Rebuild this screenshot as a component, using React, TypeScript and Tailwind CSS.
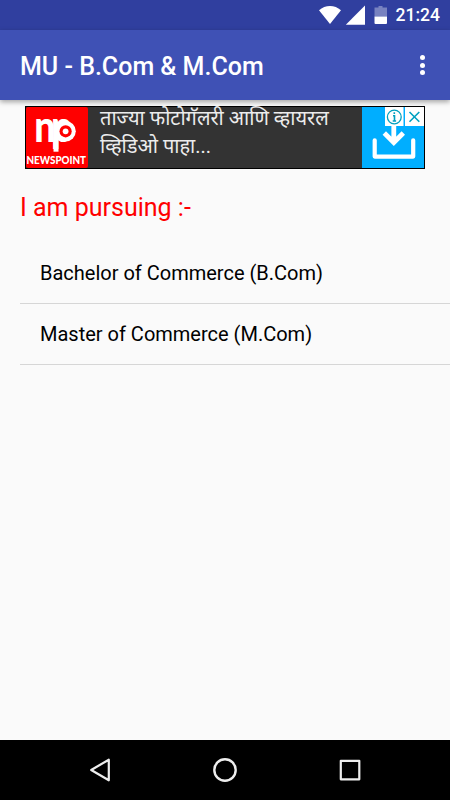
const courses = ["Bachelor of Commerce (B.Com)", "Master of Commerce (M.Com)"];

function StatusBar() {
  return (
    <div className="flex h-[30px] items-center justify-end bg-[#303f9f] pr-[10px] text-white">
      <svg width="74" height="30" viewBox="0 0 74 30" fill="currentColor">
        {/* wifi */}
        <path d="M5 10.2C8.200 7.500 12 6 16 6s7.800 1.500 11 4.200L16 24z" />
        {/* signal */}
        <path d="M51 5.500V24.700H31.800z" />
        {/* battery */}
        <path d="M64.500 6h4v1.500h4.500v9h-12.500V7.500h4z" opacity="0.35" />
        <path d="M60.500 16.500H73V23a1 1 0 0 1-1 1H61.500a1 1 0 0 1-1-1z" />
      </svg>
      <span className="ml-2 pt-[1px] text-[17.5px] leading-[29px] font-medium">21:24</span>
    </div>
  );
}

function AppBar() {
  return (
    <header className="relative flex h-[70px] items-center justify-between bg-[#3f51b5] pr-[25px] pl-[20px] text-white shadow-[0_2px_5px_rgba(0,0,0,0.35)]">
      <h1 className="pt-[4px] text-[25px] leading-[30px] font-medium">MU - B.Com &amp; M.Com</h1>
      <button aria-label="More options" className="flex flex-col gap-[2.5px]">
        <span className="h-[5px] w-[5px] rounded-full bg-white" />
        <span className="h-[5px] w-[5px] rounded-full bg-white" />
        <span className="h-[5px] w-[5px] rounded-full bg-white" />
      </button>
    </header>
  );
}

function NewsPointLogo() {
  return (
    <svg width="62" height="61" viewBox="0 0 62 61" className="shrink-0 overflow-visible">
      <rect width="62" height="61" rx="2" fill="#f00" />
      <g fill="#fff" fontFamily="Lato, sans-serif" fontWeight="900">
        <text x="9.4" y="34.5" fontSize="43" letterSpacing="-5.4" transform="scale(0.88 1)">
          np
        </text>
        <text x="0.5" y="57" fontSize="10.5" textLength="59.5" lengthAdjust="spacingAndGlyphs">
          NEWSPOINT
        </text>
      </g>
      {/* ringed bowl and long stem of the p */}
      <path d="M27.500 30h5v14.700h-5z" fill="#fff" />
      <circle cx="39.6" cy="24.3" r="10.2" fill="#fff" />
      <circle cx="39.6" cy="24.3" r="6.1" fill="#f00" />
      <circle cx="39.6" cy="24.3" r="2.9" fill="#fff" />
    </svg>
  );
}

function AdBanner() {
  return (
    <div className="mx-auto mt-[6px] flex h-[63px] w-[400px] border border-black bg-[#333]">
      <NewsPointLogo />
      <p className="-mt-[3px] h-[60px] flex-1 pl-[12px] text-[20px] leading-[28px] text-[#ececec]">
        ताज्या फोटोगॅलरी आणि व्हायरल
        <br />
        व्हिडिओ पाहा...
      </p>
      <svg width="62" height="61" viewBox="0 0 62 61" className="shrink-0">
        <rect width="62" height="61" fill="#00aeff" />
        <g fill="none" stroke="#fff" strokeWidth="4.2" strokeLinejoin="round">
          <path d="M12.700 33.300V49.600h38.500V33.300" strokeLinecap="round" />
          <path d="M31.800 18v17M22.300 26l9.500 9.500 9.500-9.500" strokeWidth="4.800" strokeLinejoin="miter" />
        </g>
        <path d="M23 0h18.500v19H23zM43 0h19v19H43z" fill="#fff" />
        <g fill="none" stroke="#00a0c0" strokeWidth="1.3">
          <circle cx="32.300" cy="10" r="6.9" />
          <path
            d="M31 8.700h1.500v5M30.700 14h3.400M32.300 5.300v1.800M47.500 5l9.800 9.800M57.300 5l-9.800 9.800"
            strokeWidth="1.600"
          />
        </g>
      </svg>
    </div>
  );
}

function NavBar() {
  return (
    <nav className="flex h-[60px] items-center justify-center gap-[95px] bg-black">
      <svg width="30" height="30" viewBox="0 0 30 30" fill="none" stroke="#eee" strokeWidth="2.2" strokeLinejoin="round">
        <path d="M23.800 4.700v20.600L6.200 15z" />
      </svg>
      <svg width="30" height="30" viewBox="0 0 30 30" fill="none" stroke="#eee" strokeWidth="2.4">
        <circle cx="15" cy="15" r="10.7" />
      </svg>
      <svg width="30" height="30" viewBox="0 0 30 30" fill="none" stroke="#eee" strokeWidth="2.2" strokeLinejoin="round">
        <path d="M5.800 5.800h18.500v18.500H5.800z" />
      </svg>
    </nav>
  );
}

export default function App() {
  return (
    <div className="flex h-[800px] w-[450px] flex-col overflow-hidden bg-[#fafafa] font-['Roboto','Noto_Sans',sans-serif]">
      <StatusBar />
      <AppBar />
      <main className="flex-1">
        <AdBanner />
        <h2 className="mt-[24px] pl-[20px] text-[25px] leading-[30px] text-[#f00]">I am pursuing :-</h2>
        <ul className="mt-[20px] ml-[20px]">
          {courses.map((course) => (
            <li
              key={course}
              className="h-[61px] border-b border-[#d6d6d6] pl-[20px] text-[20px] leading-[61px] text-black"
            >
              {course}
            </li>
          ))}
        </ul>
      </main>
      <NavBar />
    </div>
  );
}
